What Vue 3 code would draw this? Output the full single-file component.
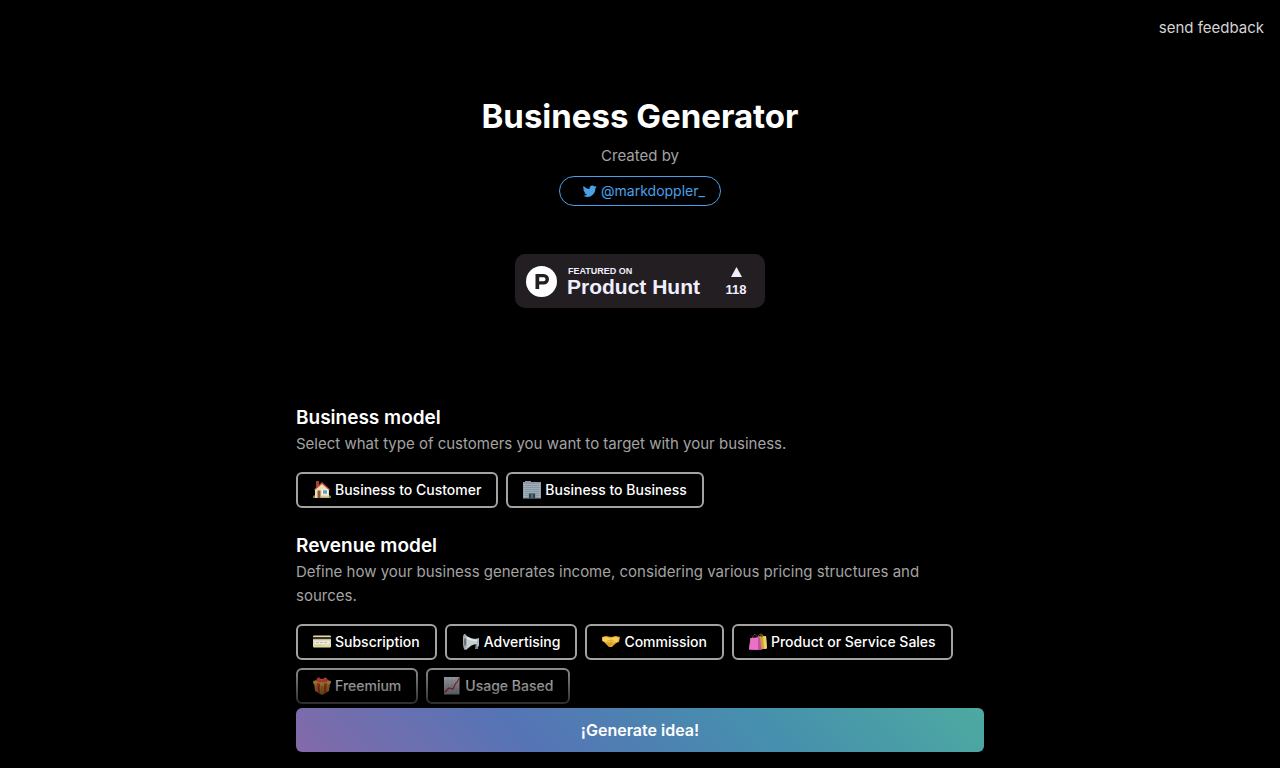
<template>
    <div class="page">
        <header class="topbar">
            <a href="#feedback" class="topbar_link">send feedback</a>
        </header>

        <div class="hero">
            <h1 class="hero_title">Business Generator</h1>
            <p class="hero_by">Created by</p>
            <a href="#markdoppler" class="hero_author">
                <svg class="hero_bird" viewBox="0 0 24 24" aria-hidden="true">
                    <path
                        d="M23.6 4.9c-.9.4-1.8.7-2.8.8 1-.6 1.8-1.6 2.1-2.7-.9.6-2 1-3.1 1.2a4.9 4.9 0 0 0-8.4 4.5C7.4 8.500 3.700 6.600 1.300 3.500a4.900 4.900 0 0 0 1.500 6.600c-.8 0-1.600-.2-2.200-.6v.1c0 2.400 1.700 4.400 3.900 4.800-.7.2-1.500.2-2.200.1.6 2 2.400 3.400 4.600 3.400A9.900 9.900 0 0 1-.4 19.900 13.900 13.900 0 0 0 7.200 22.100c9.100 0 14-7.500 14-14v-.6c1-.7 1.800-1.600 2.400-2.600z" />
                </svg>
                <span>@markdoppler_</span>
            </a>
            <a href="#producthunt" class="hero_badge" aria-label="Featured on Product Hunt">
                <svg width="250" height="54" viewBox="0 0 250 54">
                    <rect width="250" height="54" rx="10" fill="#221e21" />
                    <circle cx="26.500" cy="27.500" r="15.500" fill="#fff" />
                    <path fill="#221e21" fill-rule="evenodd"
                        d="M20.500 20h8.300a5.200 5.200 0 0 1 0 10.400h-4.600V35h-3.700zM24.200 23.300v3.900h4.400a1.950 1.950 0 0 0 0-3.900z" />
                    <g fill="#f0eeff" font-family="'Liberation Sans', sans-serif" font-weight="700">
                        <text x="53" y="20" font-size="9">FEATURED ON</text>
                        <text x="52" y="40" font-size="21">Product Hunt</text>
                        <path d="M221.500 13l5.500 10h-11z" />
                        <text x="221" y="40" font-size="13" text-anchor="middle">118</text>
                    </g>
                </svg>
            </a>
        </div>

        <main class="content">
            <section v-for="section in sections" :key="section.title" class="section">
                <h2 class="section_title">{{ section.title }}</h2>
                <p class="section_text">{{ section.text }}</p>
                <div class="options">
                    <button v-for="option in section.options" :key="option.label" type="button" class="option"
                        :class="{ 'option--active': selected[section.title] === option.label }"
                        @click="select(section, option)">
                        <svg class="option_icon" viewBox="0 0 18 18" aria-hidden="true">
                            <g v-if="option.icon === 'house'">
                                <path fill="#5d8c38" d="M0 15c1-1 3-1 4 0h10c1-1 3-1 4 0v2H0z" />
                                <path fill="#a8402f" d="M3 0h3v6H3z" />
                                <path fill="#f0dcb4" d="M2 8l7-6 7 6v9H2z" />
                                <path fill="#b9483a" d="M9 1l8 7.500-.8.8L9 3 1.800 9.300 1 8.500z" />
                                <path fill="#8a5639" d="M4.500 9.500h3V17h-3z" />
                                <path fill="#f7f3e8" d="M9 8.500h6v5H9z" />
                                <path fill="#5a9bd0" d="M10 9.300h4v3.400h-4z" />
                                <path fill="#c8a87c" d="M8 15.500h8V17H8z" />
                            </g>
                            <g v-else-if="option.icon === 'office'">
                                <path fill="#a08c8c" d="M2 0h6v2H2z" />
                                <path fill="#8e9ca6" d="M0 1h18v16.500H0z" />
                                <path stroke="#b4c5d0" stroke-width=".8"
                                    d="M1 3.500h16M1 5.500h16M1 7.500h16M1 9.500h16M1 11.500h16M1 13.500h4M13 13.500h4M1 15.500h4M13 15.500h4" />
                                <path stroke="#7e8d98" stroke-width=".6"
                                    d="M3 2v15M5 2v15M7 2v10M9 2v10M11 2v10M13 2v15M15 2v15" />
                                <path fill="#334450" d="M6 12.500h6v5H6z" />
                                <path stroke="#7497ab" d="M9 13v4" />
                            </g>
                            <g v-else-if="option.icon === 'card'">
                                <rect y="2.500" width="18" height="12" rx="1" fill="#e5dca8" />
                                <path fill="#35342b" d="M0 4h18v2.200H0z" />
                                <path fill="#e9eaea" d="M1.500 8h15v3h-15z" />
                                <path stroke="#a9adb3" stroke-width=".8" d="M3 9.500h3m1 0h3m1 0h3" />
                                <path fill="#d3c78d" d="M1.500 12.300h8v.8h-8z" />
                            </g>
                            <g v-else-if="option.icon === 'megaphone'">
                                <path fill="#7d858b" d="M12 6l5-1-1 11h-3l1-7-2 1z" />
                                <path fill="#c8cdd0" d="M2 1c5 4 9 5 13 5v5c-4 0-7 2-11 6C1 13 0 5 2 1z" />
                                <path fill="#eceeef" d="M3 2c4 4 8 5 12 5v1C10 8 6 7 3 4z" />
                                <ellipse cx="3" cy="9" rx="2" ry="8" fill="#a4abb0" />
                                <ellipse cx="3" cy="9" rx="1" ry="4" fill="#656e75" />
                                <path fill="#a9bac8" d="M15 6l2-1v8l-2 1z" />
                            </g>
                            <g v-else-if="option.icon === 'handshake'">
                                <path fill="#e0a62c" d="M0 4l4-1 5 1 5-1 4 1-1 5-3 1-4 4-3 0-5-5-2-1z" />
                                <path fill="#f9d25a" d="M1 4.500l3-.5 5 1.500L13 4l4 1-1 3-3 2.500L9 8 6 9.500 4 9 1 8z" />
                                <path fill="none" stroke="#c98d22" stroke-width=".6"
                                    d="M5 8.500l2-1 3-.5 4 3M6 11l2 2M8 10.500l2 2" />
                            </g>
                            <g v-else-if="option.icon === 'bags'">
                                <path fill="none" stroke="#8c6b2b" d="M9 6c0-6 5-7 6 0M11 5c0-4 3-4 4 0" />
                                <path fill="#c9a238" d="M9 3.500l8-.5 1 12.500-7 1z" />
                                <path fill="#ead066" d="M14 3.300l3-.3 1 12.500-3 .5z" />
                                <path fill="none" stroke="#7a4a58" stroke-width=".8" d="M3 6c1-6 5-6 6 0" />
                                <path fill="#c94ba4" d="M1.500 5L11 4.500 12.500 17 0 16.500z" />
                                <path fill="#ea70c8" d="M1.500 5L9 4.500V17l-9-.5z" />
                            </g>
                            <g v-else-if="option.icon === 'gift'">
                                <path fill="#dc9c34" d="M1 6l8 2 8-2-1 8-7 4-7-4z" />
                                <path fill="#f0b448" d="M0 4l9-2 9 2-.5 3L9 9 .5 7z" />
                                <path fill="#e04038" d="M4 6l3 .8V16.800l-2-1zM11 6.800l3-.8-1 9.800-2 1z" />
                                <path fill="#f0524a" d="M9 5C5 6 2 4 4 1.500s4 0 5 2c1-2 3-4.500 5-2s0 4.500-5 3.500z" />
                                <path fill="#b8752a" d="M8.700 9h.6v9h-.6z" />
                            </g>
                            <g v-else>
                                <path fill="#cbd1dc" d="M1 0h15.500v17.500H1z" />
                                <path stroke="#b4bbc8" stroke-width=".6"
                                    d="M1 4h15M1 8h15M1 12h15M5 0v17M9 0v17M13 0v17" />
                                <path fill="none" stroke="#d8323a" stroke-width="1.200"
                                    d="M1.500 15.500L6 11l4 1 2.500-5.500 1.500-1L16 1" />
                            </g>
                        </svg>
                        <span>{{ option.label }}</span>
                    </button>
                </div>
            </section>
        </main>

        <footer class="footer">
            <button type="button" class="generate">¡Generate idea!</button>
        </footer>
    </div>
</template>
<script setup>
import { ref } from 'vue'

const sections = [
    {
        title: 'Business model',
        text: 'Select what type of customers you want to target with your business.',
        options: [
            { icon: 'house', label: 'Business to Customer' },
            { icon: 'office', label: 'Business to Business' },
        ],
    },
    {
        title: 'Revenue model',
        text: 'Define how your business generates income, considering various pricing structures and sources.',
        options: [
            { icon: 'card', label: 'Subscription' },
            { icon: 'megaphone', label: 'Advertising' },
            { icon: 'handshake', label: 'Commission' },
            { icon: 'bags', label: 'Product or Service Sales' },
            { icon: 'gift', label: 'Freemium' },
            { icon: 'chart', label: 'Usage Based' },
        ],
    },
]

const selected = ref({})

const select = (section, option) => {
    selected.value[section.title] = option.label
}
</script>
<style>
body {
    background: #000;
}
</style>
<style scoped>
.page {
    min-height: 100vh;
    box-sizing: border-box;
    background: #000;
    color: #fff;
    font-family: Inter, "Liberation Sans", sans-serif;
    font-size: 15px;
    line-height: 24px;
}

.topbar {
    display: flex;
    justify-content: flex-end;
    padding: 16px;
}

.topbar_link {
    color: #d4d4d4;
    text-decoration: none;
}

.hero {
    display: flex;
    flex-direction: column;
    align-items: center;
    padding: 40px 16px 0;
}

.hero_title {
    margin: 0;
    font-size: 33px;
    line-height: 40px;
    font-weight: 700;
}

.hero_by {
    margin: 8px 0;
    color: #a3a3a3;
}

.hero_author {
    display: flex;
    align-items: center;
    gap: 4px;
    padding: 4px 15px 4px 23px;
    border: 1px solid #4aa1e8;
    border-radius: 16px;
    color: #4aa1e8;
    font-size: 14px;
    line-height: 20px;
    text-decoration: none;
}

.hero_bird {
    width: 14px;
    height: 14px;
    fill: currentColor;
}

.hero_badge {
    display: flex;
    margin-top: 48px;
}

.content {
    display: flex;
    flex-direction: column;
    gap: 24px;
    max-width: 688px;
    margin: 0 auto;
    padding: 96px 16px 64px;
}

.section_title {
    margin: 0;
    font-size: 19px;
    line-height: 28px;
    font-weight: 600;
}

.section_text {
    max-width: 672px;
    margin: 0;
    color: #a3a3a3;
}

.options {
    display: flex;
    flex-wrap: wrap;
    gap: 8px;
    margin-top: 16px;
}

.option {
    display: flex;
    align-items: center;
    gap: 4px;
    padding: 6px 15px;
    border: 2px solid #a3a3a3;
    border-radius: 6px;
    background: #000;
    color: #fff;
    font-family: inherit;
    font-size: 14px;
    line-height: 20px;
    font-weight: 500;
    cursor: pointer;
}

.option--active {
    border-color: #4aa1e8;
}

.option_icon {
    width: 18px;
    height: 18px;
}

/* fades the options out behind the fixed button */
.footer {
    position: fixed;
    right: 0;
    bottom: 0;
    left: 0;
    padding: 48px 16px 16px;
    background: linear-gradient(to bottom, transparent, #000 60px);
}

.generate {
    display: block;
    width: 100%;
    max-width: 688px;
    margin: 0 auto;
    padding: 10px 16px;
    border: 0;
    border-radius: 6px;
    background: linear-gradient(45deg, #836aaa, #5574b5, #468fae, #4daaa0);
    color: #fff;
    font-family: inherit;
    font-size: 16px;
    line-height: 24px;
    font-weight: 600;
    cursor: pointer;
}
</style>
